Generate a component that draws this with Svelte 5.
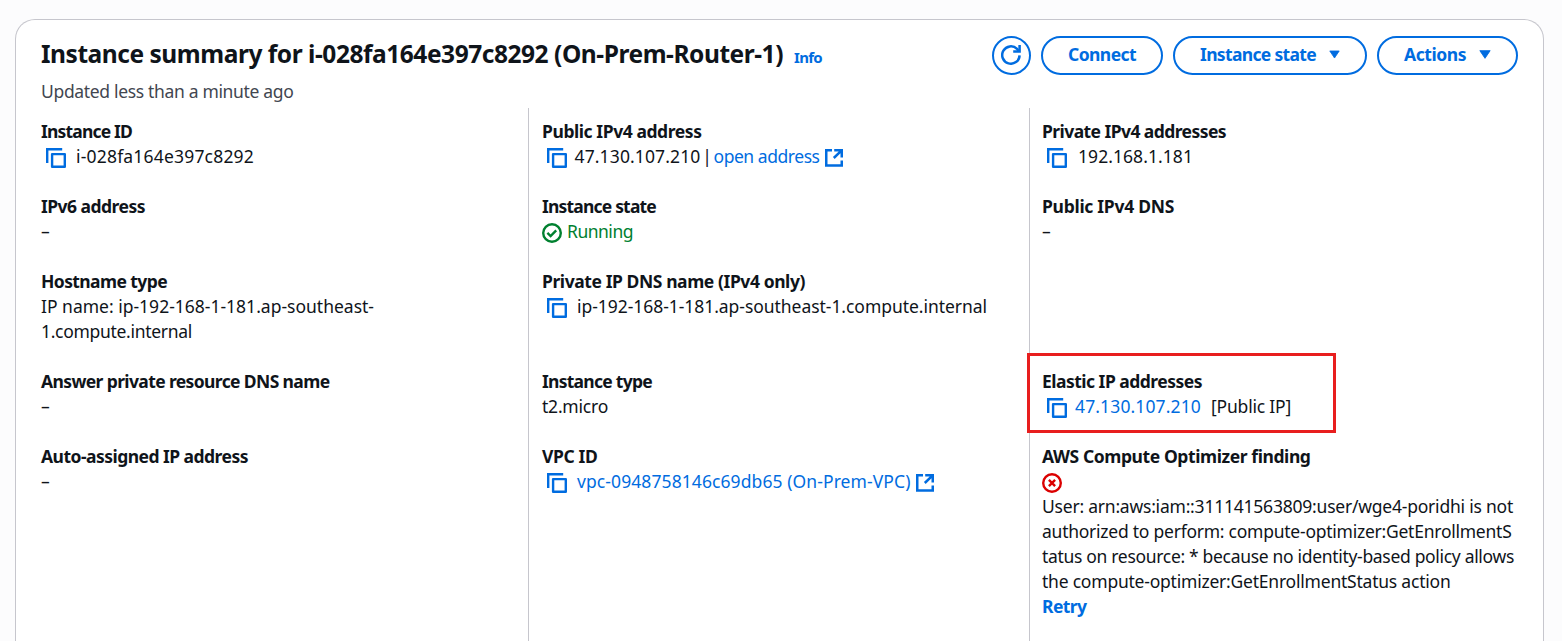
<script>
  const columns = [
    [
      { label: 'Instance ID', lw: 91, copy: true, gap: 10, text: 'i-028fa164e397c8292', w: 178 },
      { label: 'IPv6 address', lw: 104, text: '–', w: 9 },
      {
        label: 'Hostname type', lw: 126,
        lines: [
          { text: 'IP name: ip-192-168-1-181.ap-southeast-', w: 333 },
          { text: '1.compute.internal', w: 151 }
        ]
      },
      { label: 'Answer private resource DNS name', lw: 288.5, text: '–', w: 9 },
      { label: 'Auto-assigned IP address', lw: 207, text: '–', w: 9 }
    ],
    [
      { label: 'Public IPv4 address', lw: 159.5, copy: true, gap: 7.5, text: '47.130.107.210', w: 126, open: 'open address', ow: 106 },
      { label: 'Instance state', lw: 114, status: 'ok', text: 'Running', w: 66 },
      { label: 'Private IP DNS name (IPv4 only)', lw: 263, copy: true, gap: 10, text: 'ip-192-168-1-181.ap-southeast-1.compute.internal', w: 410 },
      { label: 'Instance type', lw: 110, text: 't2.micro', w: 66 },
      { label: 'VPC ID', lw: 55.5, copy: true, gap: 10, text: 'vpc-0948758146c69db65 (On-Prem-VPC)', w: 333.5, link: true, external: true }
    ],
    [
      { label: 'Private IPv4 addresses', lw: 184, copy: true, gap: 11, text: '192.168.1.181', w: 115 },
      { label: 'Public IPv4 DNS', lw: 132, text: '–', w: 9 },
      { empty: true },
      { label: 'Elastic IP addresses', lw: 160, copy: true, gap: 8, text: '47.130.107.210', w: 126, link: true, note: '[Public IP]', nw: 80, marked: true },
      {
        label: 'AWS Compute Optimizer finding', lw: 268.5, status: 'error',
        lines: [
          { text: 'User: arn:aws:iam::311141563809:user/wge4-poridhi is not', w: 471 },
          { text: 'authorized to perform: compute-optimizer:GetEnrollmentS', w: 469.5 },
          { text: 'tatus on resource: * because no identity-based policy allows', w: 472 },
          { text: 'the compute-optimizer:GetEnrollmentStatus action', w: 408.5 }
        ],
        retry: true
      }
    ]
  ];

  // Spreads the tracking of a label so that it fills the given width.
  function fit(node, width) {
    const natural = node.getBoundingClientRect().width;
    const n = node.textContent.length;
    node.style.letterSpacing = `${(width - natural) / n}px`;
  }
</script>

{#snippet copyIcon()}
  <svg class="copy" width="20" height="20" viewBox="0 0 20 20" fill="none" stroke="currentColor" stroke-width="2.4">
    <path d="M1.2 15V1.2H16.2" />
    <path d="M6.1 6.1H18.8V18.8H6.1Z" stroke-linejoin="round" />
  </svg>
{/snippet}

{#snippet externalIcon()}
  <svg class="external" width="18" height="18" viewBox="0 0 18 18" fill="none" stroke="currentColor" stroke-width="2.5">
    <path d="M7 1.25H1.25V16.5H16.75V11.5" />
    <path d="M9.2 1.25H16.75V8.4M16.4 1.6L8.8 9" />
  </svg>
{/snippet}

{#snippet caret()}
  <svg width="14" height="11" viewBox="0 0 14 11">
    <path d="M1 1H13L7 10Z" fill="currentColor" stroke="currentColor" stroke-linejoin="round" />
  </svg>
{/snippet}

<main class="card">
  <header>
    <div class="titles">
      <div class="title-row">
        <h1><span use:fit={742}>Instance summary for i-028fa164e397c8292 (On-Prem-Router-1)</span></h1>
        <a class="info"><span use:fit={28}>Info</span></a>
      </div>
      <p class="updated"><span use:fit={252.5}>Updated less than a minute ago</span></p>
    </div>
    <div class="buttons">
      <button class="refresh" aria-label="Refresh">
        <svg width="20" height="20" viewBox="0 0 20 20" fill="none" stroke="currentColor" stroke-width="2.5">
          <path d="M18.6 10.4A8.7 8.7 0 1 1 16 3.8L18 6.4" />
          <path d="M18.6 0V6.6H12.2" />
        </svg>
      </button>
      <button class="connect"><span use:fit={68}>Connect</span></button>
      <button class="state"><span use:fit={116}>Instance state</span>{@render caret()}</button>
      <button class="actions"><span use:fit={62}>Actions</span>{@render caret()}</button>
    </div>
  </header>

  <section class="columns">
    {#each columns as column}
      <div class="column">
        {#each column as item}
          <div class="item" class:marked={item.marked}>
            {#if !item.empty}
              <div class="label"><span use:fit={item.lw}>{item.label}</span></div>
              {#if item.status === 'error'}
                <div class="value error">
                  <svg width="20" height="20" viewBox="0 0 20 20" fill="none" stroke="currentColor" stroke-width="2.4">
                    <circle cx="10" cy="10" r="8.8" /><path d="M6.9 6.9L13.1 13.1M13.1 6.9L6.9 13.1" />
                  </svg>
                </div>
              {/if}
              {#if item.lines}
                {#each item.lines as line}
                  <div class="value"><span use:fit={line.w}>{line.text}</span></div>
                {/each}
              {:else}
                <div class="value" class:ok={item.status === 'ok'} class:link={item.link}>
                  {#if item.copy}{@render copyIcon()}<i style:width="{item.gap}px"></i>{/if}
                  {#if item.status === 'ok'}
                    <svg class="check" width="20" height="20" viewBox="0 0 20 20" fill="none" stroke="currentColor" stroke-width="2.4">
                      <circle cx="10" cy="10" r="8.8" /><path d="M5.4 9.9L8.6 13L14.2 7.3" />
                    </svg>
                  {/if}
                  <span use:fit={item.w}>{item.text}</span>
                  {#if item.open}
                    <span class="bar">|</span>
                    <a class="link"><span use:fit={item.ow}>{item.open}</span>{@render externalIcon()}</a>
                  {/if}
                  {#if item.external}{@render externalIcon()}{/if}
                  {#if item.note}<span class="note"><span use:fit={item.nw}>{item.note}</span></span>{/if}
                </div>
              {/if}
              {#if item.retry}
                <div class="value retry"><span use:fit={44.5}>Retry</span></div>
              {/if}
            {/if}
          </div>
        {/each}
      </div>
    {/each}
  </section>
</main>

<style>
  :global(body) {
    background: #fcfcfd;
    overflow: hidden;
  }
  .card {
    box-sizing: border-box;
    width: 1529px;
    height: 622px;
    margin: 19px 0 0 15px;
    padding: 16px 25px 0;
    border: 1px solid #c6c6cd;
    border-bottom: 0;
    border-radius: 20px 20px 0 0;
    background: #fff;
    color: #0f141a;
    font: 17.5px/25px "Noto Sans", sans-serif;
    white-space: nowrap;
  }
  span {
    display: inline-block;
  }
  header {
    display: flex;
    justify-content: space-between;
    height: 72px;
  }
  .title-row {
    display: flex;
    align-items: baseline;
    gap: 11px;
    height: 36px;
  }
  h1 {
    margin: 0;
    font-size: 24.5px;
    line-height: 35px;
    font-weight: 700;
  }
  .info {
    font-size: 15px;
    font-weight: 700;
    color: #006ce0;
  }
  .updated {
    margin: 7px 0 0;
    color: #424650;
  }
  .buttons {
    display: flex;
    gap: 10px;
  }
  button {
    box-sizing: border-box;
    display: flex;
    align-items: center;
    height: 39px;
    padding: 0 25px 2px;
    border: 2px solid #006ce0;
    border-radius: 20px;
    background: #fff;
    color: #006ce0;
    font: 700 17.5px/25px "Noto Sans", sans-serif;
  }
  button svg {
    margin-left: 13px;
  }
  .refresh {
    width: 39px;
    padding: 0 1px 1px 0;
    justify-content: center;
  }
  .refresh svg {
    margin: 0;
  }
  .connect {
    width: 122px;
  }
  .state {
    width: 194px;
  }
  .actions {
    width: 141px;
  }
  .columns {
    display: grid;
    grid-template-columns: 487px 501px 489px;
    height: 533px;
  }
  .column {
    display: grid;
    grid-template-rows: 75px 75px 100px 75px 197px;
    padding-top: 11px;
  }
  .column + .column {
    border-left: 1px solid #c6c6cd;
    padding-left: 13px;
  }
  .column:last-child {
    padding-left: 12px;
  }
  .label {
    font-weight: 700;
  }
  .value {
    display: flex;
    align-items: center;
    height: 25px;
  }
  .value svg {
    flex: none;
    position: relative;
    top: 1px;
  }
  .copy {
    margin-left: 5px;
    color: #006ce0;
  }
  .check {
    margin-right: 5px;
  }
  .link {
    display: flex;
    align-items: center;
    color: #006ce0;
  }
  .external {
    margin-left: 5.5px;
  }
  .bar {
    width: 13px;
    text-align: center;
  }
  .note {
    margin-left: 10px;
    color: #0f141a;
  }
  .ok {
    color: #00802f;
  }
  .error {
    color: #db0000;
  }
  .retry {
    color: #006ce0;
    font-weight: 700;
  }
  .marked {
    position: relative;
  }
  .marked::after {
    content: "";
    box-sizing: border-box;
    position: absolute;
    left: -15px;
    top: -16px;
    width: 309px;
    height: 80px;
    border: 3px solid #e81e1e;
  }
</style>
